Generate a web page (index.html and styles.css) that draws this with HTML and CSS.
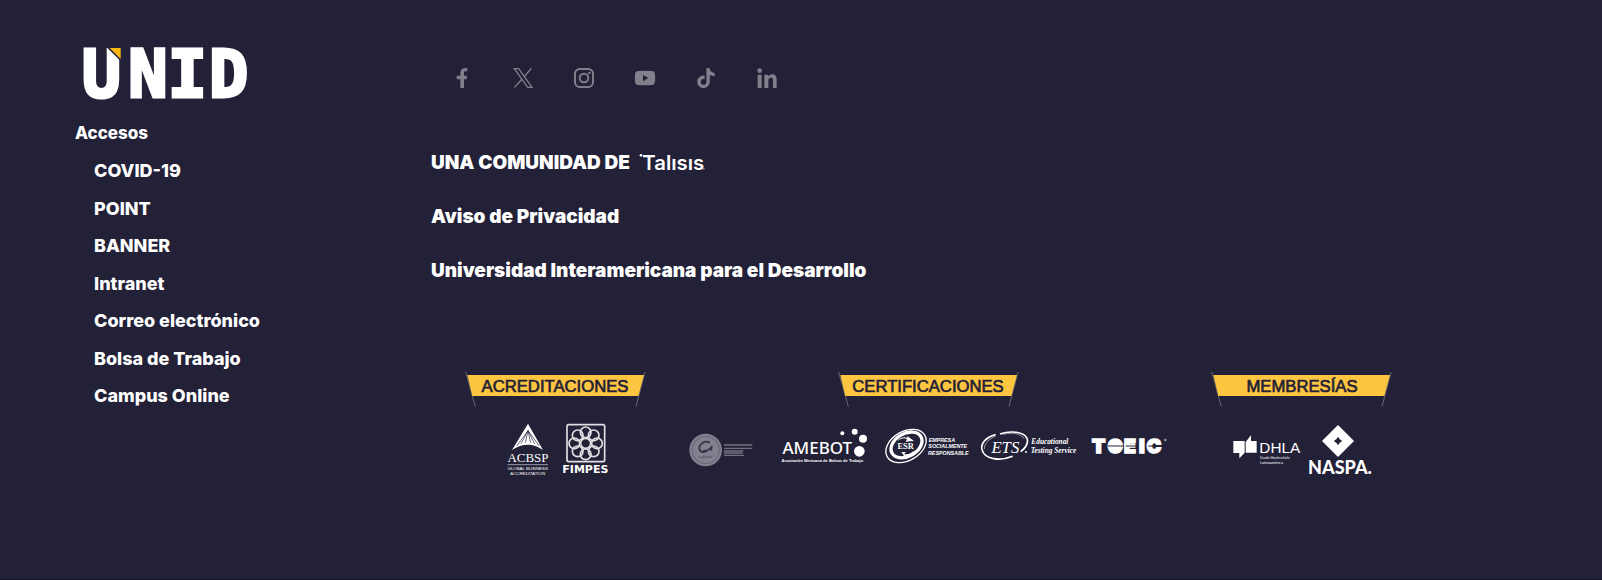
FILE: index.html
```html
<!DOCTYPE html>
<html lang="es">
<head>
<meta charset="utf-8">
<title>UNID</title>
<link rel="stylesheet" href="styles.css">
</head>
<body>
<footer class="footer">
  <div class="access">
    <svg class="brand" viewBox="66 51 504 156" role="img" aria-label="UNID">
      <text class="brand-text" y="198" x="65 205 323 447">UNID</text>
      <path class="brand-cut" d="M137 46H188V96Z"/>
      <path class="brand-corner" d="M149 51H182V84Z"/>
    </svg>
    <h2 class="access-title">Accesos</h2>
    <ul class="access-list">
      <li><a href="#">COVID-19</a></li>
      <li><a href="#">POINT</a></li>
      <li><a href="#">BANNER</a></li>
      <li><a href="#">Intranet</a></li>
      <li><a href="#">Correo electrónico</a></li>
      <li><a href="#">Bolsa de Trabajo</a></li>
      <li><a href="#">Campus Online</a></li>
    </ul>
  </div>

  <div class="main">
    <nav class="social" aria-label="Redes sociales">
      <a href="#" aria-label="Facebook"><svg viewBox="63 54 60 60"><path d="M88 114V88H77V77H88V69C88 59 94 54 103 54H109V64H104C100 64 99 66 99 69V77H108L107 88H99V114Z"/></svg></a>
      <a href="#" aria-label="X"><svg viewBox="247 54 60 60"><path class="thin" d="M251 56H264L304 112H291ZM302 55L280 81M251 113L274 87"/></svg></a>
      <a href="#" aria-label="Instagram"><svg viewBox="432 54 60 60"><rect class="line" x="435" y="57" width="54" height="54" rx="14"/><circle class="line" cx="462" cy="84" r="13"/><circle cx="478" cy="69" r="4"/></svg></a>
      <a href="#" aria-label="YouTube"><svg viewBox="615 54 60 60"><path fill-rule="evenodd" d="M624 63Q645 61 666 63Q674 64 675 73Q676 84 675 95Q674 104 666 105Q645 107 624 105Q616 104 615 95Q614 84 615 73Q616 64 624 63ZM639 75V94L655 84Z"/></svg></a>
      <a href="#" aria-label="TikTok"><svg viewBox="0 0 24 24"><path d="M12.525.02c1.31-.02 2.61-.01 3.91-.02.08 1.53.63 3.09 1.75 4.17 1.12 1.11 2.7 1.62 4.24 1.79v4.03c-1.44-.05-2.89-.35-4.2-.97-.57-.26-1.1-.59-1.62-.93-.01 2.92.01 5.84-.02 8.75-.08 1.4-.54 2.79-1.35 3.94-1.31 1.92-3.58 3.17-5.91 3.21-1.43.08-2.86-.31-4.08-1.03-2.02-1.19-3.44-3.37-3.65-5.71-.02-.5-.03-1-.01-1.49.18-1.9 1.12-3.72 2.58-4.96 1.66-1.44 3.98-2.13 6.15-1.72.02 1.48-.04 2.96-.04 4.44-.99-.32-2.15-.23-3.02.37-.63.41-1.11 1.04-1.36 1.75-.21.51-.15 1.07-.14 1.61.24 1.64 1.82 3.02 3.5 2.87 1.12-.01 2.19-.66 2.77-1.61.19-.33.4-.67.41-1.06.1-1.79.06-3.57.07-5.36.01-4.03-.01-8.05.02-12.07z"/></svg></a>
      <a href="#" aria-label="LinkedIn"><svg viewBox="983 54 60 60"><circle cx="991" cy="62" r="7"/><path d="M985 74H997V114H985ZM1005 74H1016V80C1019 75 1024 73 1029 73C1039 73 1042 80 1042 90V114H1031V92C1031 87 1030 83 1025 83C1019 83 1017 87 1017 92V114H1005Z"/></svg></a>
    </nav>

    <ul class="links">
      <li><a href="#">UNA COMUNIDAD DE
        <svg class="talisis" viewBox="672 36 198 60" role="img" aria-label="Talisis"><circle cx="678" cy="43" r="4"/><text x="682" y="86">Talısıs</text><circle class="dim" cx="866" cy="83" r="3"/></svg></a></li>
      <li><a href="#">Aviso de Privacidad</a></li>
      <li><a href="#">Universidad Interamericana para el Desarrollo</a></li>
    </ul>

    <div class="seals">
      <section class="group">
        <svg class="banner" viewBox="45 36 540 108" role="img" aria-label="Acreditaciones"><path class="pole" d="M47 36L76 140M585 36L558 140"/><path class="cloth" d="M52 45H582L565 108H67Z"/><text x="315" y="97">ACREDITACIONES</text></svg>
        <div class="logos">
          <svg width="48" height="52" viewBox="159 189 144 156" role="img" aria-label="ACBSP">
            <path d="M234 191L279 270Q234 239 186 270Z"/>
            <path class="ray" d="M234 212L200 258M234 212L213 251M234 212L226 248M234 212L242 248M234 212L254 252M234 212L268 258"/>
            <text class="serif" x="234" y="306" font-size="39">ACBSP</text>
            <path class="hair" d="M172 314H294"/>
            <text x="233" y="329" font-size="13">GLOBAL BUSINESS</text>
            <text x="233" y="344" font-size="13">ACCREDITATION</text>
          </svg>
          <svg width="45" height="52" viewBox="339 189 135 156" role="img" aria-label="FIMPES">
            <g class="flower"><rect x="351" y="194" width="113" height="111" rx="5"/>
            <circle cx="407" cy="250" r="15"/><circle cx="407" cy="217" r="16"/><circle cx="431" cy="226" r="16"/><circle cx="441" cy="250" r="16"/><circle cx="431" cy="274" r="16"/><circle cx="407" cy="283" r="16"/><circle cx="383" cy="274" r="16"/><circle cx="373" cy="250" r="16"/><circle cx="383" cy="226" r="16"/></g>
            <text class="wide" x="406" y="340" font-size="33">FIMPES</text>
          </svg>
        </div>
      </section>

      <section class="group">
        <svg class="banner" viewBox="45 36 540 108" role="img" aria-label="Certificaciones"><path class="pole" d="M47 36L76 140M585 36L558 140"/><path class="cloth" d="M52 45H582L565 108H67Z"/><text x="315" y="97">CERTIFICACIONES</text></svg>
        <div class="logos">
          <svg class="muted" width="81" height="52" viewBox="717 189 243 156" role="img" aria-label="Certificación de calidad">
            <circle cx="767" cy="270" r="49"/><circle class="ring" cx="767" cy="270" r="41"/>
            <path class="mark" d="M780 248C764 239 746 253 748 267C751 280 770 279 778 266M760 272C776 273 782 266 786 258L783 272"/>
            <text class="dark" x="767" y="293" font-size="13">calidad</text>
            <path class="hair" d="M822 255H907M822 265H907M822 273H880M822 279H878M822 286H882"/>
          </svg>
          <svg width="89" height="52" viewBox="36 189 267 156" role="img" aria-label="AMEBOT">
            <text class="dejavu" x="142" y="281" font-size="51">AMEBOT</text>
            <circle cx="217" cy="220" r="6"/><circle cx="254" cy="215" r="9"/><circle cx="279" cy="236" r="12"/><circle cx="268" cy="274" r="16"/>
            <text class="bold" x="157" y="305" font-size="12">Asociación Mexicana de Bolsas de Trabajo</text>
          </svg>
          <svg width="86" height="52" viewBox="339 189 258 156" role="img" aria-label="Empresa Socialmente Responsable">
            <g transform="rotate(-30 408 258)"><ellipse class="oval" cx="408" cy="258" rx="65" ry="44"/><ellipse class="oval-heavy" cx="411" cy="256" rx="50" ry="34"/></g>
            <path d="M382 243Q397 231 411 237L407 245L432 243L412 228L412 233Q393 229 382 243ZM433 270Q420 286 402 282L408 276L394 276L405 292L405 287Q426 289 433 270Z"/>
            <text class="serif bold" x="407" y="267" font-size="25">ESR</text>
            <g class="left italic heavy" font-size="16"><text x="476" y="246">EMPRESA</text><text x="475" y="265">SOCIALMENTE</text><text x="474" y="284">RESPONSABLE</text></g>
          </svg>
          <svg width="98" height="52" viewBox="33 189 294 156" role="img" aria-label="ETS Educational Testing Service">
            <path class="swoosh" d="M77 224C46 232 31 252 36 269C43 299 91 304 128 289M90 222C121 211 162 215 171 235C177 252 166 264 152 275"/>
            <path class="hair" d="M77 229C56 237 43 250 43 267M99 223C130 216 152 221 162 236"/>
            <text class="serif italic" x="106" y="279" font-size="50">ETS</text>
            <circle cx="168" cy="276" r="3"/>
            <g class="left serif italic bold" font-size="22"><text x="184" y="253">Educational</text><text x="182" y="278">Testing Service</text></g>
          </svg>
          <svg width="76" height="52" viewBox="366 189 228 156" role="img" aria-label="TOEIC">
            <g class="left heavy inter" font-size="58"><text class="fat" x="369 416 465 510 533" y="279">TOEIC</text></g>
            <circle cx="441" cy="258" r="16"/>
            <path class="slice" d="M417 258H465M470 258H508M538 258H578"/><circle class="dim" cx="589" cy="240" r="4"/>
          </svg>
        </div>
      </section>

      <section class="group">
        <svg class="banner" viewBox="45 36 540 108" role="img" aria-label="Membresías"><path class="pole" d="M47 36L76 140M585 36L558 140"/><path class="cloth" d="M52 45H582L565 108H67Z"/><text x="318" y="97">MEMBRESÍAS</text></svg>
        <div class="logos">
          <svg width="67" height="52" viewBox="120 189 201 156" role="img" aria-label="DHLA">
            <path d="M133 243H167V278L151 295V279H133ZM170 278V246L186 226V243H203V278Z"/>
            <text class="left" x="211" y="279" font-size="46">DHLA</text>
            <g class="left" font-size="11"><text x="213" y="298">Duale Hochschule</text><text x="213" y="311">Latinoamérica</text></g>
          </svg>
          <svg width="65" height="52" viewBox="357 189 195 156" role="img" aria-label="NASPA">
            <path fill-rule="evenodd" d="M447 195L495 243L447 291L399 243ZM447 230L442 238L434 243L442 248L447 256L452 248L460 243L452 238Z"/>
            <text class="lato heavy" x="453" y="341" font-size="54">NASPA.</text>
          </svg>
        </div>
      </section>
    </div>
  </div>
</footer>
</body>
</html>
```
FILE: styles.css
```css
* { box-sizing: border-box; }

body {
  margin: 0;
  background: #232137;
  color: #fff;
  font-family: Inter, "Liberation Sans", sans-serif;
}

a { color: inherit; text-decoration: none; }
ul { list-style: none; margin: 0; padding: 0; }

svg {
  display: block;
  flex: none;
  fill: #fff;
  overflow: visible;
}

.footer {
  display: grid;
  grid-template-columns: 356px 1fr;
  min-height: 100vh;
  padding: 48px 75px;
  border-bottom: 1px solid #1c1528;
}

.brand { width: 168px; height: 52px; margin: 0 0 14px 7px; }
.brand-text {
  font: bold 196px "DejaVu Sans Mono", monospace;
  stroke: #fff;
  stroke-width: 9px;
}
.brand-cut { fill: #232137; }
.brand-corner { fill: #fdb913; }

.access-title {
  margin: 0;
  font-size: 17px;
  font-weight: 800;
  line-height: 38px;
}
.access-list {
  display: grid;
  align-content: space-between;
  min-height: 262px;
  padding-left: 19px;
  font-size: 18px;
  font-weight: 800;
  line-height: 37px;
}

.social {
  display: flex;
  gap: 41px;
  padding: 20px 0 0 21px;
}
.social svg { width: 20px; height: 20px; fill: #817f8c; }
.social .line { fill: none; stroke: #817f8c; stroke-width: 6px; }
.social .thin { fill: none; stroke: #817f8c; stroke-width: 4px; }

.links {
  margin-top: 48px;
  font-size: 19px;
  font-weight: 900;
  line-height: 54px;
}
.links a { display: inline-flex; align-items: center; gap: 9px; }
.talisis { width: 66px; height: 20px; }
.talisis text { font: 600 61px Inter, sans-serif; }
.dim { opacity: .5; }

.seals {
  display: flex;
  gap: 44px;
  margin-top: 74px;
  padding-left: 34px;
}
.group {
  display: flex;
  flex-direction: column;
  align-items: center;
  gap: 15px;
  min-width: 180px;
}
.banner { width: 180px; height: 36px; }
.banner text {
  fill: #232137;
  stroke: #232137;
  stroke-width: 2px;
  font: 50px "Liberation Sans", sans-serif;
  text-anchor: middle;
}
.cloth { fill: #fec541; }
.pole { fill: none; stroke: #67656f; stroke-width: 3px; }

.logos { display: flex; gap: 12px; }
.logos text { font-family: "Liberation Sans", sans-serif; text-anchor: middle; }
.logos .left text, .logos text.left { text-anchor: start; }
.logos text.serif, .logos .serif text { font-family: "Liberation Serif", serif; }
.logos text.dejavu { font-family: "Noto Sans", sans-serif; font-weight: 500; }
.logos text.lato { font-family: Lato, sans-serif; }
.logos text.wide { font-family: "DejaVu Sans", sans-serif; font-weight: bold; }
.logos .inter text { font-family: Inter, sans-serif; }
.bold { font-weight: bold; }
.heavy { font-weight: 900; }
.italic { font-style: italic; }
.fat { stroke: #fff; stroke-width: 5px; }
.hair { fill: none; stroke: #d4d3d9; stroke-width: 2px; }
.ray { fill: none; stroke: #232137; stroke-width: 2px; }
.flower { fill: none; stroke: #e0e0e4; stroke-width: 5px; }
.oval { fill: none; stroke: #fff; stroke-width: 4px; }
.oval-heavy { fill: none; stroke: #fff; stroke-width: 10px; }
.swoosh { fill: none; stroke: #fff; stroke-width: 5px; }
.slice { fill: none; stroke: #232137; stroke-width: 3px; }
.muted { fill: #82808e; }
.muted .ring { fill: none; stroke: #55536a; stroke-width: 2px; }
.muted .mark { fill: none; stroke: #343247; stroke-width: 5px; }
.muted .dark { fill: #4d4a5f; }
.muted .hair { stroke: #73717f; stroke-width: 4px; }
```
